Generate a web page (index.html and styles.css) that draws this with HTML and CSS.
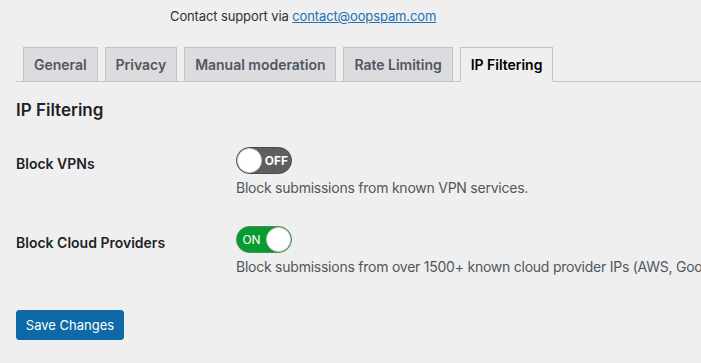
FILE: index.html
```html
<!DOCTYPE html>
<html>
<head>
<meta charset="utf-8">
<link rel="stylesheet" href="styles.css">
</head>
<body>
<div class="wrap">
  <p class="contact">Contact support via <a href="#">contact@oopspam.com</a></p>
  <nav class="tabs">
    <a class="tab" href="#">General</a>
    <a class="tab" href="#">Privacy</a>
    <a class="tab" href="#">Manual moderation</a>
    <a class="tab" href="#">Rate Limiting</a>
    <a class="tab active" href="#">IP Filtering</a>
  </nav>
  <h2 class="title">IP Filtering</h2>
  <div class="form">
    <div class="row">
      <div class="label">Block VPNs</div>
      <div class="field">
        <span class="toggle off"><span class="knob"></span><span class="state">OFF</span></span>
        <p class="desc">Block submissions from known VPN services.</p>
      </div>
    </div>
    <div class="row">
      <div class="label">Block Cloud Providers</div>
      <div class="field">
        <span class="toggle on"><span class="state">ON</span><span class="knob"></span></span>
        <p class="desc">Block submissions from over 1500+ known cloud provider IPs (AWS, Google Cloud, Azure, etc.)</p>
      </div>
    </div>
  </div>
  <div class="submit"><button class="button">Save Changes</button></div>
</div>
</body>
</html>
```
FILE: styles.css
```css
html, body {
  margin: 0;
  padding: 0;
  background: #efefef;
  overflow: hidden;
}
body {
  font-family: Inter, "Liberation Sans", Arial, sans-serif;
  font-size: 13px;
  color: #1d2327;
}
.wrap {
  padding-left: 16px;
  width: 685px;
  overflow: hidden;
}
.contact {
  margin: 0;
  padding: 7px 0 0 154px;
  line-height: 18px;
  color: #2c3338;
  letter-spacing: -0.12px;
}
.contact a {
  color: #2271b1;
  text-decoration: underline;
}
.tabs {
  display: flex;
  gap: 7px;
  margin-top: 22px;
  padding-left: 7px;
  border-bottom: 1px solid #c3c4c7;
  height: 35px;
  box-sizing: border-box;
}
.tab {
  display: block;
  height: 35px;
  box-sizing: border-box;
  padding: 0 10px;
  line-height: 33px;
  font-size: 14px;
  font-weight: 600;
  letter-spacing: -0.02px;
  color: #50575e;
  background: #dcdcde;
  border: 1px solid #c3c4c7;
  text-decoration: none;
}
.tab.active {
  background: #efefef;
  color: #000;
  border-bottom-color: #efefef;
}
.title {
  margin: 16px 0 0;
  font-size: 17px;
  line-height: 24px;
  font-weight: 600;
  color: #1d2327;
}
.form {
  margin-top: 10px;
}
.row {
  display: flex;
}
.label {
  width: 200px;
  padding: 22px 10px 0 0;
  line-height: 20px;
  font-size: 14px;
  font-weight: 600;
  flex: none;
}
.field {
  padding: 15px 10px 13px;
  white-space: nowrap;
}
.toggle {
  display: flex;
  align-items: center;
  width: 56px;
  height: 27px;
  box-sizing: border-box;
  border-radius: 14px;
  padding: 0;
  color: #fff;
  font-size: 12px;
}
.toggle.off {
  background: #5e5e5e;
  border: 1px solid #4a4a4a;
}
.toggle.on {
  background: #0a9a32;
  border: 1px solid #4b8a5c;
}
.knob {
  width: 25px;
  height: 25px;
  border-radius: 50%;
  background: #fff;
  box-sizing: border-box;
  border: 1px solid #cfcfcf;
  flex: none;
}
.state {
  flex: 1;
  text-align: center;
}
.off .state {
  font-weight: 700;
}
.desc {
  margin: 4px 0 0;
  line-height: 20px;
  color: #50575e;
  font-size: 14px;
  letter-spacing: -0.24px;
}
.submit {
  padding-top: 20px;
}
.button {
  font-family: inherit;
  font-size: 13px;
  height: 30px;
  width: 108px;
  padding: 0;
  line-height: 28px;
  background: #0e69a7;
  border: 1px solid #0e69a7;
  border-radius: 3px;
  color: #fff;
  white-space: nowrap;
}
```
